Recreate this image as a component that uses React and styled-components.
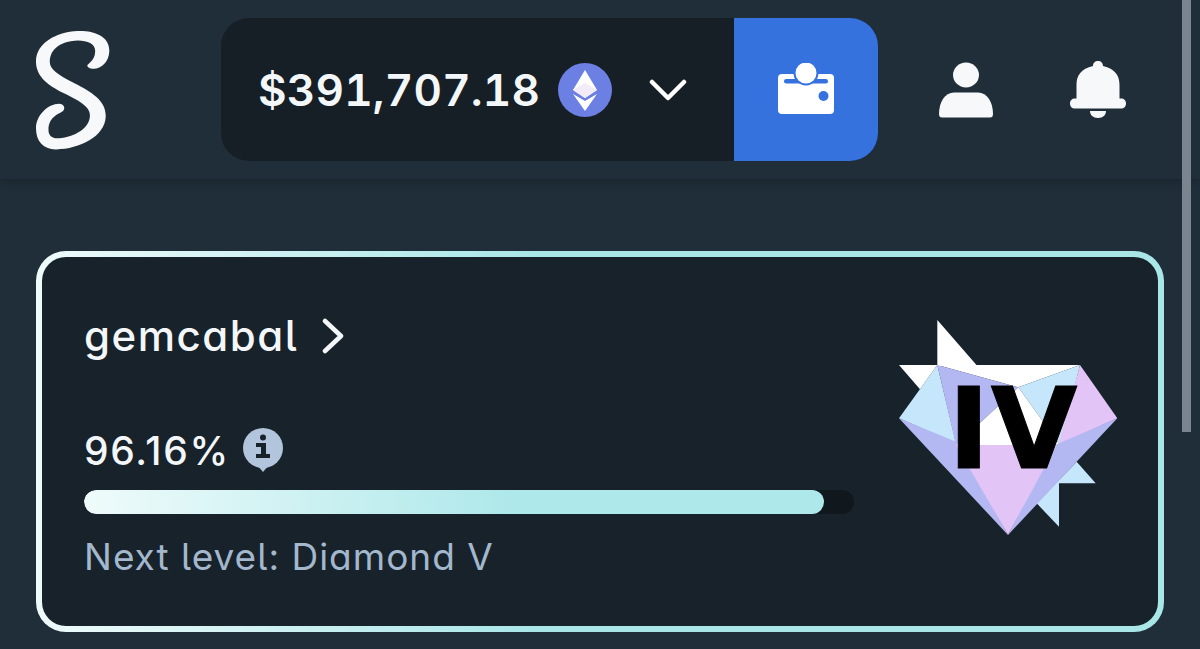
import styled, { createGlobalStyle } from "styled-components";

const GlobalStyle = createGlobalStyle`
  html, body {
    margin: 0;
    padding: 0;
    height: 100%;
    overflow: hidden;
    background: #1f2e39;
  }
  body {
    font-family: Inter, "Open Sans", sans-serif;
    font-feature-settings: "cv05", "cv11";
  }
`;

const Page = styled.div`
  position: relative;
  width: 1200px;
  height: 649px;
  overflow: hidden;
  background: #1f2e39;
`;

const Scrollbar = styled.div`
  position: absolute;
  top: 0;
  right: 9px;
  width: 9px;
  height: 432px;
  background: #7b858f;
  z-index: 5;
`;

const Header = styled.header`
  display: flex;
  align-items: center;
  box-sizing: border-box;
  height: 179px;
  padding: 0 74px 0 35px;
  background: #1f2e39;
  box-shadow: 0 3px 10px rgba(0, 0, 0, 0.2);
`;

const Logo = styled.svg`
  width: 75px;
  height: 122px;
  margin-right: 111px;
  flex-shrink: 0;
`;

const BalancePill = styled.div`
  display: flex;
  width: 657px;
  height: 143px;
  border-radius: 28px;
  overflow: hidden;
  background: #161f26;
`;

const BalanceInfo = styled.div`
  display: flex;
  align-items: center;
  flex: 1;
  padding-left: 37px;
`;

const Amount = styled.span`
  width: 284px;
  color: #f4f7f9;
  font-size: 44px;
  font-weight: 600;
  font-feature-settings: "cv05", "cv11", "tnum";
  letter-spacing: 0.2px;
  white-space: nowrap;
  line-height: 1;
`;

const EthIcon = styled.svg`
  width: 54px;
  height: 54px;
  margin-left: 16px;
`;

const Chevron = styled.svg`
  width: 38px;
  height: 24px;
  margin-left: 37px;
`;

const WalletButton = styled.div`
  display: flex;
  align-items: center;
  justify-content: center;
  width: 144px;
  padding-bottom: 1px;
  background: #3672de;
`;

const HeaderIcons = styled.div`
  display: flex;
  align-items: center;
  gap: 76px;
  margin-left: auto;
`;

const HeaderIcon = styled.svg`
  width: 56px;
  height: 58px;
  display: block;
`;

const Content = styled.main`
  padding: 72px 36px 0;
`;

const CardFrame = styled.div`
  box-sizing: border-box;
  width: 1128px;
  height: 381px;
  padding: 6px;
  border-radius: 30px;
  background: linear-gradient(90deg, #effbfb 0%, #a8e6e8 45%, #a8e6e8 100%);
`;

const Card = styled.section`
  display: flex;
  box-sizing: border-box;
  height: 100%;
  padding: 43px 18px 0 42px;
  border-radius: 24px;
  background: #18222b;
`;

const Stats = styled.div`
  display: flex;
  flex-direction: column;
  width: 770px;
  margin-right: 26px;
  flex-shrink: 0;
`;

const NameRow = styled.div`
  display: flex;
  align-items: center;
  gap: 24px;
  height: 76px;
  margin-top: -2px;
`;

const Name = styled.span`
  color: #f4f7f9;
  font-size: 42px;
  font-weight: 500;
  letter-spacing: 1.5px;
  line-height: 1;
`;

const PercentRow = styled.div`
  display: flex;
  align-items: center;
  gap: 13px;
  margin-top: 52px;
  height: 48px;
`;

const Percent = styled.span`
  color: #f4f7f9;
  font-size: 39px;
  font-weight: 500;
  letter-spacing: 1.7px;
  line-height: 1;
`;

const Track = styled.div`
  height: 24px;
  margin-top: 16px;
  border-radius: 12px;
  background: #10171d;
  overflow: hidden;
`;

const Fill = styled.div`
  height: 100%;
  border-radius: 12px;
  background: linear-gradient(90deg, #effbfb 0%, #aee8ea 58%);
`;

const NextLevel = styled.div`
  margin-top: 24px;
  color: #a3b7cd;
  font-size: 37px;
  font-weight: 400;
  letter-spacing: 1px;
  line-height: 1;
`;

const GemBadge = styled.div`
  position: relative;
  width: 260px;
  height: 250px;
`;

const GemLevel = styled.span`
  position: absolute;
  left: 68px;
  top: 64px;
  color: #000;
  font-family: "DejaVu Sans", sans-serif;
  font-size: 112px;
  font-weight: 700;
  letter-spacing: 1px;
  line-height: 130px;
  -webkit-text-stroke: 1px #000;
`;

const SLogo = () => (
  <Logo viewBox="105 85 228 367">
    <path
      fill="#f6f8fa"
      d="M235 89C280 87 332 102 331 150C330 185 305 205 282 204C272 204 264 199 264 194C264 189 288 180 288 150C288 128 265 118 235 118C190 119 150 140 150 183C150 205 175 222 225 248C275 274 322 300 320 350C318 410 240 448 170 449C130 450 108 425 108 385C108 345 145 310 178 310C190 310 198 320 192 330C186 340 146 345 146 390C146 408 158 417 178 415C225 411 272 385 272 345C272 318 240 300 180 272C140 250 108 225 108 182C108 125 170 92 235 89Z"
    />
  </Logo>
);

const EthereumIcon = () => (
  <EthIcon viewBox="0 0 54 54">
    <circle cx="27" cy="27" r="27" fill="#6c80e4" />
    <polygon points="27,7 15,27 27,35 39,27" fill="#fff" />
    <polygon points="15,27 27,20 39,27 27,35" fill="#f3ecf8" />
    <polygon points="15,31 27,38 39,31 27,48" fill="#fff" />
  </EthIcon>
);

const WalletIcon = () => (
  <svg width="56" height="52" viewBox="0 0 56 52">
    <rect x="0" y="11" width="56" height="40" rx="4" fill="#fff" />
    <rect x="6" y="16" width="44" height="4.5" rx="2.2" fill="#3672de" />
    <circle cx="28" cy="10" r="12.5" fill="#3672de" />
    <circle cx="28" cy="10" r="10.5" fill="#fff" />
    <circle cx="45.5" cy="33" r="5" fill="#3672de" />
  </svg>
);

const UserIcon = () => (
  <HeaderIcon viewBox="0 0 56 58">
    <ellipse cx="28" cy="14" rx="13" ry="12.5" fill="#f6f8fa" />
    <path
      fill="#f6f8fa"
      d="M16 31.5H40C49 31.5 55 41 55 53C55 55.5 54 56.5 52 56.5H4C2 56.5 1 55.5 1 53C1 41 7 31.5 16 31.5Z"
    />
  </HeaderIcon>
);

const BellIcon = () => (
  <HeaderIcon viewBox="0 0 56 58">
    <path
      fill="#f6f8fa"
      d="M28 0C31 0 33 2 33 5C45 8 49.5 14 49.5 24V37.5H51C54 37.5 56 39.5 56 42.5C56 45.5 54 47.5 51 47.5H5C2 47.5 0 45.5 0 42.5C0 39.5 2 37.5 5 37.5H6.5V24C6.5 14 11 8 23 5C23 2 25 0 28 0Z"
    />
    <path fill="#f6f8fa" d="M20 50H36C36 54 33 57 28 57C23 57 20 54 20 50Z" />
  </HeaderIcon>
);

const InfoIcon = () => (
  <svg width="40" height="44" viewBox="0 0 40 44">
    <circle cx="20" cy="20" r="20" fill="#b3c5dc" />
    <polygon points="14,37 26,37 20,44" fill="#b3c5dc" />
    <circle cx="20" cy="9.5" r="3" fill="#18222b" />
    <path fill="#18222b" d="M13 15H23V26H27V30H13V26H18V19H13Z" />
  </svg>
);

const Gem = () => (
  <svg width="260" height="250" viewBox="0 0 780 750">
    <polygon points="172,60 292,198 172,198" fill="#ffffff" />
    <polygon points="57,195 172,195 120,268" fill="#ffffff" />
    <polygon points="590,485 647,550 537,550 537,680 470,610" fill="#c5e6fb" />
    <polygon points="172,195 600,195 415,262" fill="#ffffff" />
    <polygon points="172,195 57,355 228,430" fill="#c5e6fb" />
    <polygon points="172,195 415,262 228,435" fill="#b3b8f2" />
    <polygon points="600,195 415,262 540,435" fill="#c5e6fb" />
    <polygon points="600,195 712,355 535,435" fill="#e2c5f6" />
    <polygon points="415,262 540,435 228,435" fill="#ffffff" />
    <polygon points="57,355 228,425 384,705" fill="#b3b8f2" />
    <polygon points="712,355 525,435 384,705" fill="#b3b8f2" />
    <polygon points="228,435 530,435 384,705" fill="#e2c5f6" />
  </svg>
);

export default function App() {
  return (
    <Page>
      <GlobalStyle />
      <Scrollbar />
      <Header>
        <SLogo />
        <BalancePill>
          <BalanceInfo>
            <Amount>$391,707.18</Amount>
            <EthereumIcon />
            <Chevron viewBox="0 0 38 24">
              <path
                d="M3 4L19 20L35 4"
                fill="none"
                stroke="#fff"
                strokeWidth="4.5"
                strokeLinecap="round"
                strokeLinejoin="round"
              />
            </Chevron>
          </BalanceInfo>
          <WalletButton>
            <WalletIcon />
          </WalletButton>
        </BalancePill>
        <HeaderIcons>
          <UserIcon />
          <BellIcon />
        </HeaderIcons>
      </Header>
      <Content>
        <CardFrame>
          <Card>
            <Stats>
              <NameRow>
                <Name>gemcabal</Name>
                <svg width="22" height="36" viewBox="0 0 22 36">
                  <path
                    d="M3 3L19 18L3 33"
                    fill="none"
                    stroke="#f4f7f9"
                    strokeWidth="4.5"
                    strokeLinecap="round"
                    strokeLinejoin="round"
                  />
                </svg>
              </NameRow>
              <PercentRow>
                <Percent>96.16%</Percent>
                <InfoIcon />
              </PercentRow>
              <Track>
                <Fill style={{ width: `${(740 / 770) * 100}%` }} />
              </Track>
              <NextLevel>Next level: Diamond V</NextLevel>
            </Stats>
            <GemBadge>
              <Gem />
              <GemLevel>IV</GemLevel>
            </GemBadge>
          </Card>
        </CardFrame>
      </Content>
    </Page>
  );
}
